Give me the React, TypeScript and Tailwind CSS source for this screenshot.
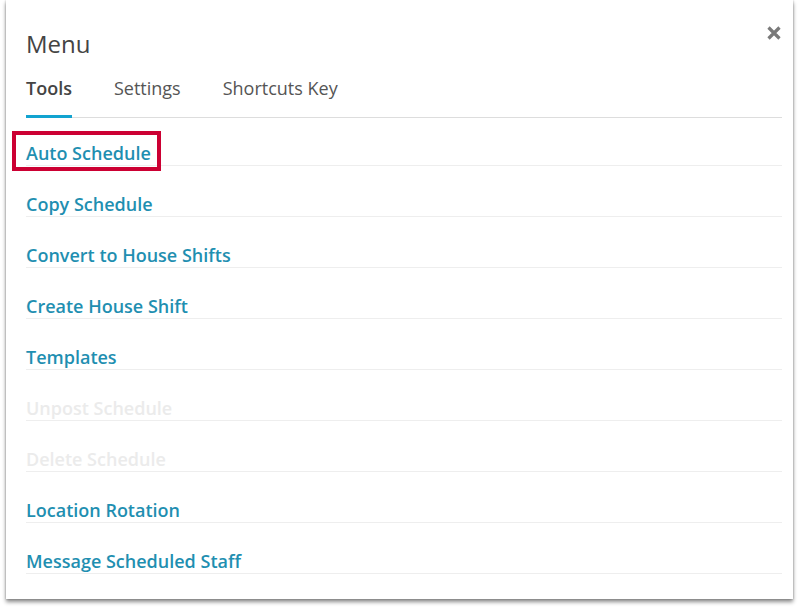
const tabs = ["Tools", "Settings", "Shortcuts Key"];

const tools = [
  { label: "Auto Schedule", enabled: true, highlight: true },
  { label: "Copy Schedule", enabled: true },
  { label: "Convert to House Shifts", enabled: true },
  { label: "Create House Shift", enabled: true },
  { label: "Templates", enabled: true },
  { label: "Unpost Schedule", enabled: false },
  { label: "Delete Schedule", enabled: false },
  { label: "Location Rotation", enabled: true },
  { label: "Message Scheduled Staff", enabled: true },
];

export default function App() {
  return (
    <div className="w-[799px] h-[609px] bg-white font-['Open_Sans',sans-serif]">
      {/* menu panel */}
      <div className="relative ml-[6px] w-[787px] h-[599px] bg-white pl-[20px] pr-[11px] pt-[28px] shadow-[0_0_2px_rgba(0,0,0,0.25),0_3px_4px_rgba(0,0,0,0.45)]">
        <button className="absolute top-[26px] right-[12px] text-[#7a7a7a]">
          <svg width="14" height="14" viewBox="0 0 14 14">
            <path d="M1.5 1.5 L12.5 12.5 M12.5 1.5 L1.5 12.5" stroke="currentColor" strokeWidth="3.2" />
          </svg>
        </button>

        <h2 className="text-[24px] leading-[32px] text-[#444]">Menu</h2>

        {/* tabs */}
        <div className="mt-[16px] flex gap-[42px] border-b border-[#ddd]">
          {tabs.map((t, i) => (
            <div
              key={t}
              className={
                i === 0
                  ? "-mb-px pb-[15px] text-[18px] leading-[24px] font-semibold text-[#444] border-b-[3px] border-[#12a3d0]"
                  : "pb-[15px] text-[18px] leading-[24px] text-[#555]"
              }
            >
              {t}
            </div>
          ))}
        </div>

        {/* tool list */}
        <div className="-mt-[3px]">
          {tools.map((item) => (
            <div key={item.label} className="pt-[26px] border-b border-[#eee]">
              <span
                className={
                  "relative block w-fit text-[18px] leading-[24px] font-semibold " +
                  (item.enabled ? "text-[#1f8fb1]" : "text-[#ebebeb]")
                }
              >
                {item.label}
                {item.highlight && (
                  <span className="absolute -left-[14px] -right-[10px] -top-[10px] -bottom-[6px] border-4 border-[#cc0033]" />
                )}
              </span>
            </div>
          ))}
        </div>
      </div>
    </div>
  );
}
